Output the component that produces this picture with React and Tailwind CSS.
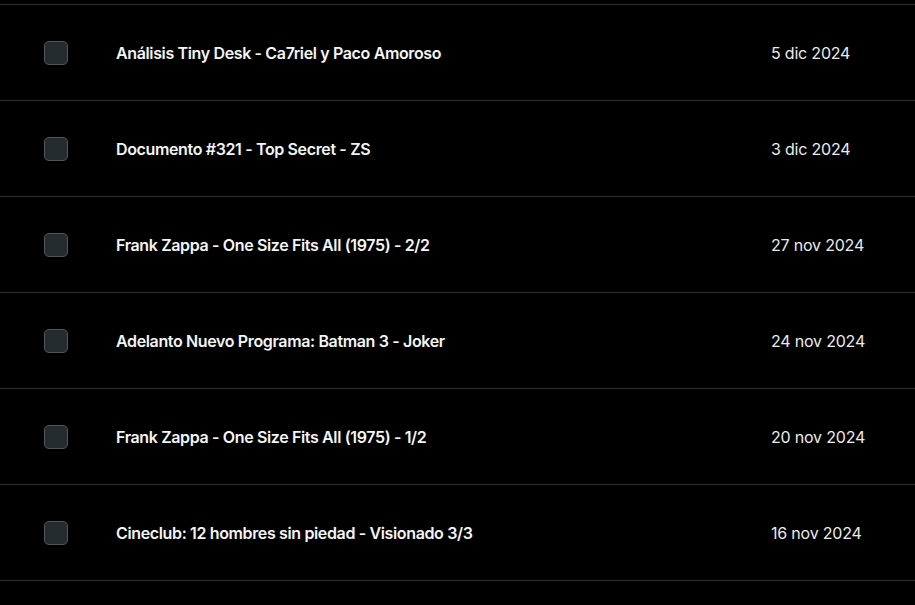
const ITEMS = [
  { title: 'Análisis Tiny Desk - Ca7riel y Paco Amoroso', date: '5 dic 2024' },
  { title: 'Documento #321 - Top Secret - ZS', date: '3 dic 2024' },
  { title: 'Frank Zappa - One Size Fits All (1975) - 2/2', date: '27 nov 2024' },
  { title: 'Adelanto Nuevo Programa: Batman 3 - Joker', date: '24 nov 2024' },
  { title: 'Frank Zappa - One Size Fits All (1975) - 1/2', date: '20 nov 2024' },
  { title: 'Cineclub: 12 hombres sin piedad - Visionado 3/3', date: '16 nov 2024' },
];

export default function App() {
  return (
    <div
      className="h-[605px] w-[915px] overflow-hidden bg-black text-white"
      style={{ fontFamily: 'Inter, "Noto Sans", sans-serif' }}
    >
      <div className="h-[5px] border-b border-[#2e2e2e]" />
      {ITEMS.map(item => (
        <div key={item.title} className="flex h-[96px] items-center border-b border-[#2e2e2e] pl-[44px]">
          <div className="h-6 w-6 shrink-0 rounded-[5px] border border-[#4f575b] bg-[#242c2f]" />
          <span className="ml-12 flex-1 text-[16px] font-semibold tracking-[-0.36px] text-[#f4f4f4]">{item.title}</span>
          <span className="w-[144px] shrink-0 text-[16px] tracking-[-0.2px] text-[#ececec]">{item.date}</span>
        </div>
      ))}
    </div>
  );
}
